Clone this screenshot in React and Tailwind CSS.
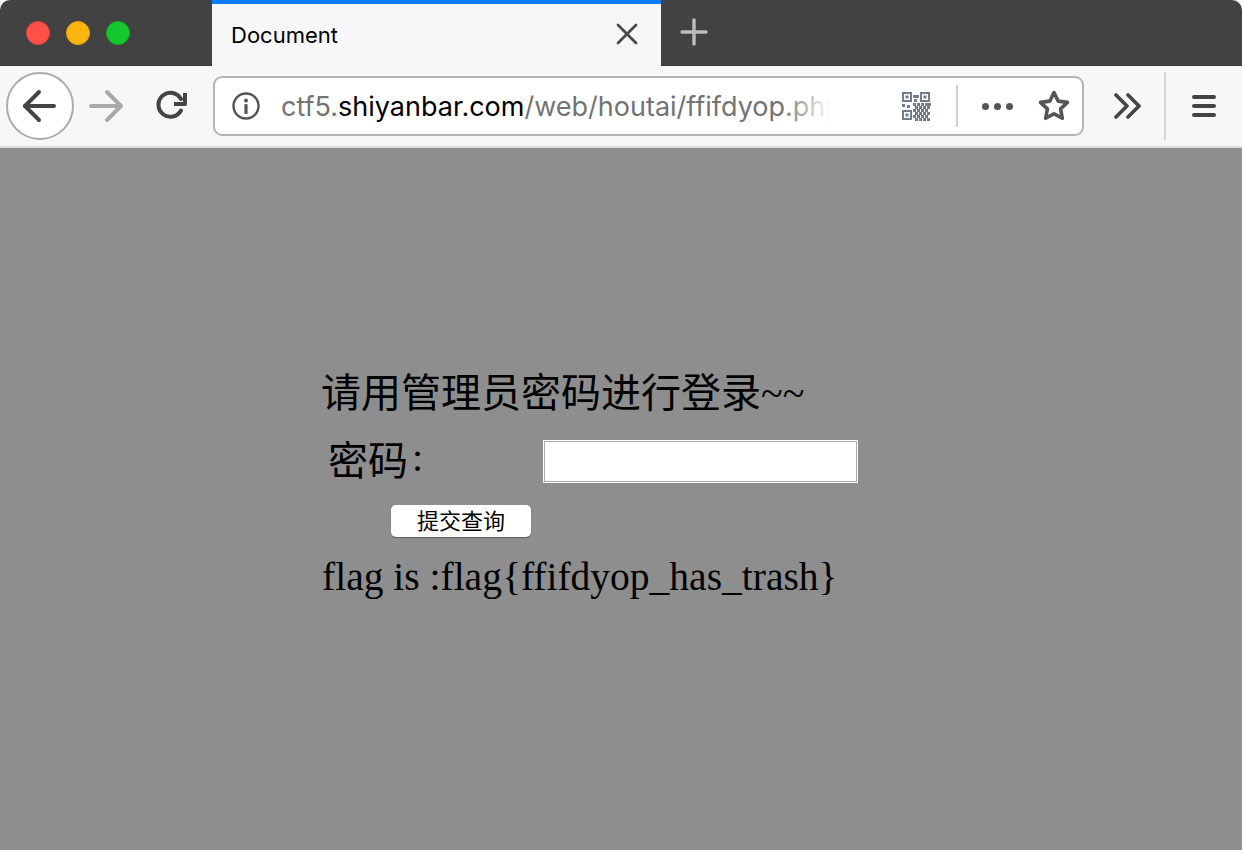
import React from 'react'

function Back() {
  return (
    <svg width="36" height="36" viewBox="0 0 36 36" fill="none" stroke="#444" strokeWidth="4" strokeLinecap="round" strokeLinejoin="round">
      <path d="M3 18h29" />
      <path d="M17 4 3 18l14 14" />
    </svg>
  )
}

function Forward() {
  return (
    <svg width="36" height="36" viewBox="0 0 36 36" fill="none" stroke="#a9a9a9" strokeWidth="4" strokeLinecap="round" strokeLinejoin="round">
      <path d="M3 18h29" />
      <path d="M19 4l14 14-14 14" />
    </svg>
  )
}

function Reload() {
  return (
    <svg width="32" height="32" viewBox="0 0 32 32" fill="none" stroke="#444" strokeWidth="4" strokeLinecap="round" strokeLinejoin="round">
      <path d="M25 20.5A12 12 0 1 1 25 9" />
      <path d="M29 3v11H18" strokeLinecap="butt" />
    </svg>
  )
}

function Info() {
  return (
    <svg width="28" height="28" viewBox="0 0 28 28" fill="none">
      <circle cx="14" cy="14" r="12.5" stroke="#555" strokeWidth="2.4" />
      <circle cx="14" cy="8.5" r="2" fill="#555" />
      <rect x="12.4" y="12" width="3.2" height="10" rx="1" fill="#555" />
    </svg>
  )
}

function Qr() {
  const dots = [
    [12, 4], [15, 4], [13, 8], [12, 12], [16, 12], [20, 12], [24, 12], [27, 12], [14, 15], [18, 15], [22, 15],
    [26, 15], [12, 18], [16, 18], [20, 18], [24, 18], [14, 21], [18, 21], [22, 21], [26, 21], [12, 24], [16, 24],
    [20, 24], [24, 24], [14, 27], [18, 27], [22, 27], [26, 27],
  ]
  return (
    <svg width="30" height="30" viewBox="0 0 30 30" fill="#6f7d8c">
      <path fillRule="evenodd" d="M1 1h10v10H1zM3 3v6h6V3z" />
      <rect x="4.5" y="4.5" width="3" height="3" />
      <path fillRule="evenodd" d="M19 1h10v10H19zM21 3v6h6V3z" />
      <rect x="22.5" y="4.5" width="3" height="3" />
      <path fillRule="evenodd" d="M1 19h10v10H1zM3 21v6h6v-6z" />
      <rect x="4.5" y="22.5" width="3" height="3" />
      <rect x="1" y="13" width="3" height="3" />
      <rect x="6" y="14" width="3" height="3" />
      {dots.map(([x, y], i) => (
        <rect key={i} x={x} y={y} width="3" height="3" />
      ))}
    </svg>
  )
}

function Star() {
  return (
    <svg width="34" height="34" viewBox="0 0 34 34" fill="none" stroke="#555" strokeWidth="3.6" strokeLinejoin="round">
      <path d="M17 3.5l4.1 8.6 9.4 1.3-6.9 6.5 1.7 9.4-8.3-4.6-8.3 4.6 1.7-9.4-6.9-6.5 9.4-1.3z" />
    </svg>
  )
}

function Chevrons() {
  return (
    <svg width="30" height="26" viewBox="0 0 30 26" fill="none" stroke="#444" strokeWidth="3.6" strokeLinecap="round" strokeLinejoin="round">
      <path d="M3 2l11 11L3 24" />
      <path d="M15 2l11 11-11 11" />
    </svg>
  )
}

export default function App() {
  return (
    <div className="w-[1242px] h-[850px] flex flex-col bg-[#8e8e8e] overflow-hidden">
      {/* tab strip */}
      <div className="h-[66px] flex bg-[#f7f7fa]">
        <div className="flex-1 flex bg-[#424242] rounded-t-[10px] border-b border-[#383838]">
          <div className="w-[212px] flex items-center gap-[16px] pl-[26px]">
            <div className="w-6 h-6 rounded-full bg-[#ff5148] border border-[#e5443c]" />
            <div className="w-6 h-6 rounded-full bg-[#ffb50f] border border-[#e8a30c]" />
            <div className="w-6 h-6 rounded-full bg-[#14c82e] border border-[#10b026]" />
          </div>
          <div className="w-[449px] -mb-px flex items-center justify-between bg-[#f7f7fa] border-t-4 border-[#0a7cff] pl-[19px] pr-[23px] font-['Inter',sans-serif] text-[22px] text-black">
            <span className="mt-[1px]">Document</span>
            <svg className="mb-[2px]" width="22" height="22" viewBox="0 0 22 22" stroke="#4a4a4a" strokeWidth="2.8" strokeLinecap="round">
              <path d="M2 2l18 18M20 2 2 20" />
            </svg>
          </div>
          <div className="pl-[19px] pt-[18px]">
            <svg width="28" height="28" viewBox="0 0 28 28" stroke="#bdbdbd" strokeWidth="3.4" strokeLinecap="round">
              <path d="M14 2v24M2 14h24" />
            </svg>
          </div>
        </div>
      </div>

      {/* toolbar */}
      <div className="h-[82px] flex items-center bg-[#f7f7fa] border-b-2 border-[#dcdcdc]">
        <div className="w-[68px] h-[68px] ml-[6px] shrink-0 flex items-center justify-center rounded-full bg-white border-2 border-[#ababab]">
          <Back />
        </div>
        <div className="ml-[14px] shrink-0"><Forward /></div>
        <div className="ml-[32px] shrink-0"><Reload /></div>
        <div className="w-[871px] h-[60px] ml-[25px] shrink-0 flex items-center bg-white border-2 border-[#b4b4b4] rounded-[9px] pl-[17px]">
          <Info />
          <div className="relative w-[550px] ml-[21px] mt-[2px] overflow-hidden whitespace-nowrap font-['Inter',sans-serif] text-[27px] text-[#737373]">
            ctf5.<span className="text-black">shiyanbar.com</span>/web/houtai/ffifdyop.php
            <div className="absolute inset-y-0 right-0 w-[50px] bg-gradient-to-r from-transparent to-white" />
          </div>
          <div className="ml-[70px]"><Qr /></div>
          <div className="w-[2px] h-[42px] ml-[25px] bg-[#d0d0d0]" />
          <div className="flex gap-[5px] ml-[24px]">
            <div className="w-[7px] h-[7px] rounded-full bg-[#555]" />
            <div className="w-[7px] h-[7px] rounded-full bg-[#555]" />
            <div className="w-[7px] h-[7px] rounded-full bg-[#555]" />
          </div>
          <div className="ml-[24px]"><Star /></div>
        </div>
        <div className="ml-[29px] shrink-0"><Chevrons /></div>
        <div className="w-[2px] h-[68px] ml-[21px] shrink-0 bg-[#d6d6d6]" />
        <div className="ml-[26px] shrink-0 flex flex-col gap-[5px]">
          <div className="w-6 h-[4px] rounded-full bg-[#444]" />
          <div className="w-6 h-[4px] rounded-full bg-[#444]" />
          <div className="w-6 h-[4px] rounded-full bg-[#444]" />
        </div>
      </div>

      {/* page */}
      <div className="flex-1 pl-[322px] pt-[223px] font-['Liberation_Serif','Noto_Sans_CJK_SC',serif] text-black">
        <div className="h-[46px] -ml-[1px] text-[40px] leading-[46px] whitespace-nowrap">请用管理员密码进行登录~~</div>
        <div className="flex items-center h-[46px] mt-[22px]">
          <div className="w-[221px] pl-[6px] text-[40px] leading-[46px] whitespace-nowrap">
            密码<span className="inline-block ml-[4px] -translate-y-[4px]">:</span>
          </div>
          <input className="w-[315px] h-[43px] mb-[2px] bg-white border border-white shadow-[inset_0_0_0_1px_#a9a9a9] outline-none" />
        </div>
        <button className="block w-[140px] h-[32px] ml-[69px] mt-[20px] pt-[2px] bg-white rounded-[5px] shadow-[0_1px_1px_rgba(0,0,0,0.35)] text-[22px] leading-[30px]">
          提交查询
        </button>
        <div className="mt-[17px] text-[39.5px] leading-[46px] whitespace-nowrap">flag is :flag{'{'}ffifdyop_has_trash{'}'}</div>
      </div>
    </div>
  )
}
